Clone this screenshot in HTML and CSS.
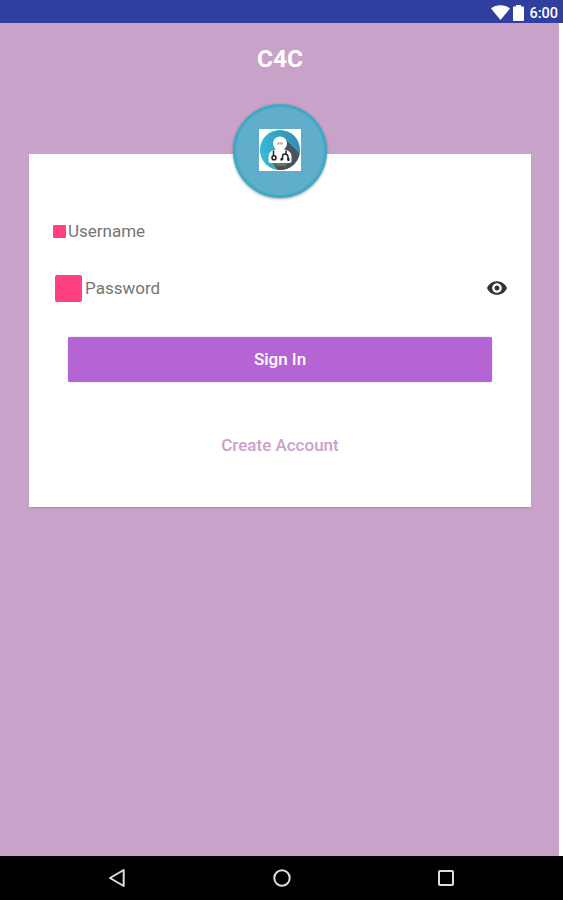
FILE: index.html
```html
<!DOCTYPE html>
<html lang="en">
<head>
    <meta charset="UTF-8">
    <meta name="viewport" content="width=device-width, initial-scale=1.0">
    <title>C4C</title>
    <link rel="stylesheet" href="styles.css">
</head>
<body>
    <header class="status-bar">
        <svg class="wifi" width="19" height="15" viewBox="0 0 19 15">
            <path d="M0 3.5C5.2-.8 13.8-.8 19 3.5L9.5 15Z" fill="#fff"/>
        </svg>
        <svg class="battery" width="11" height="16" viewBox="0 0 11 16">
            <path d="M3 0h5v1.500h2.200q.8 0 .8.8v12.900q0 .8-.8.8H.8Q0 16 0 15.200V2.300Q0 1.500.8 1.500H3Z" fill="#fff"/>
        </svg>
        <span class="time">6:00</span>
    </header>
    <main class="screen">
        <h1>C4C</h1>
        <div class="card">
            <div class="logo">
                <svg width="42" height="42" viewBox="0 0 42 42">
                    <defs>
                        <linearGradient id="disc" x1="0" y1="0.6" x2="1" y2="0.4">
                            <stop offset="0" stop-color="#35bcd6"/>
                            <stop offset="1" stop-color="#358bb4"/>
                        </linearGradient>
                        <clipPath id="round"><circle cx="21" cy="21" r="20"/></clipPath>
                    </defs>
                    <rect width="42" height="42" fill="#fff"/>
                    <g clip-path="url(#round)">
                        <rect width="42" height="42" fill="url(#disc)"/>
                        <path d="M27 11L42 26V42H19L13 33Z" fill="#46545c"/>
                        <path d="M14 34h15l-3 3H18Z" fill="#70744f"/>
                    </g>
                    <path d="M9.500 32V28q0-5 4-6.500l4-1.500h7l4 1.500q4 1.500 4 6.500v4q0 2-2 2h-19q-2 0-2-2Z" fill="#fff"/>
                    <circle cx="21" cy="14.500" r="7" fill="#fff"/>
                    <path d="M18 14.500h6" stroke="#a8bcc4" stroke-width="2"/>
                    <path d="M14.500 21.500V27M23.500 31v-3.500q0-2.500 2.500-2.500t3 2.500V31M27 25v-3.500" fill="none" stroke="#222" stroke-width="1.500"/>
                    <circle cx="15" cy="28.700" r="2" fill="none" stroke="#222" stroke-width="1.600"/>
                    <path d="M22.500 29v2.500M29.500 29v3" stroke="#222" stroke-width="2"/>
                </svg>
            </div>
            <div class="field username">
                <span class="mark small"></span>
                <label>Username</label>
            </div>
            <div class="field password">
                <span class="mark"></span>
                <label>Password</label>
                <svg class="eye" width="20" height="14" viewBox="1 4.500 22 15">
                    <path d="M12 4.500C7 4.500 2.730 7.610 1 12c1.730 4.390 6 7.500 11 7.500s9.270-3.110 11-7.500c-1.730-4.390-6-7.500-11-7.500zM12 17.300c-2.900 0-5.300-2.400-5.300-5.300s2.400-5.300 5.300-5.300 5.300 2.400 5.300 5.300-2.400 5.300-5.300 5.300zm0-8.100c-1.550 0-2.800 1.250-2.800 2.800s1.250 2.800 2.800 2.800 2.800-1.250 2.800-2.800-1.250-2.800-2.800-2.800z" fill="#333"/>
                </svg>
            </div>
            <button class="sign-in">Sign In</button>
            <a class="create">Create Account</a>
        </div>
    </main>
    <footer class="nav-bar">
        <svg width="18" height="20" viewBox="0 0 18 20">
            <path d="M15.700 2V18L2 10Z" fill="none" stroke="#ddd" stroke-width="2" stroke-linejoin="round"/>
        </svg>
        <svg width="18" height="18" viewBox="0 0 18 18">
            <circle cx="9" cy="9" r="7.700" fill="none" stroke="#ddd" stroke-width="2"/>
        </svg>
        <svg width="18" height="18" viewBox="0 0 18 18">
            <rect x="2" y="2" width="14" height="14" rx="1" fill="none" stroke="#ddd" stroke-width="2"/>
        </svg>
    </footer>
</body>
</html>
```

FILE: styles.css
```css
* {
    box-sizing: border-box;
}

body {
    display: flex;
    flex-direction: column;
    height: 100vh;
    margin: 0;
    background-color: #fff;
    font-family: Roboto, sans-serif;
}

.status-bar {
    display: flex;
    align-items: center;
    justify-content: flex-end;
    height: 23px;
    padding: 2px 5px 0 0;
    background-color: #303f9f;
    color: #fff;
}

.wifi {
    margin-right: 3px;
}

.battery {
    margin-right: 5px;
}

.time {
    padding-top: 2px;
    font-size: 14.5px;
    font-weight: 500;
}

.screen {
    flex: 1;
    margin-right: 4px;
    padding: 22px 28px 0 29px;
    background-color: #c8a2c8;
}

h1 {
    margin: 0 0 81px;
    color: #fff;
    font-size: 24.5px;
    font-weight: 700;
    line-height: 28px;
    text-align: center;
}

.card {
    display: flex;
    flex-direction: column;
    height: 353px;
    padding: 0 24px;
    background-color: #fff;
    box-shadow: 0 1px 1px rgba(90, 50, 90, 0.2);
}

.logo {
    display: flex;
    align-items: center;
    justify-content: center;
    align-self: center;
    width: 94px;
    height: 94px;
    margin-top: -50px;
    border: 3px solid #3fa9c8;
    border-radius: 50%;
    background-color: #60aec9;
    box-shadow: 0 1px 3px rgba(0, 0, 0, 0.35);
}

.logo svg {
    margin-top: -2px;
}

.field {
    display: flex;
    align-items: center;
    height: 28px;
    color: #757575;
    font-size: 17px;
}

.username {
    margin-top: 19px;
}

.password {
    margin-top: 29px;
}

.mark {
    width: 27px;
    height: 27px;
    margin: 0 3px 0 2px;
    border-radius: 2px;
    background-color: #ff4081;
}

.mark.small {
    width: 13px;
    height: 13px;
    margin: 0 2px 0 0;
    border-radius: 1px;
}

.eye {
    margin-left: auto;
}

.sign-in {
    height: 45px;
    margin: 35px 15px 0;
    padding: 0 0 2px;
    border: none;
    border-radius: 2px;
    background-color: #b565d3;
    box-shadow: 0 0 1px #8e4aa8;
    color: #fff;
    font-family: inherit;
    font-size: 17px;
    font-weight: 500;
}

.create {
    margin-top: 53px;
    color: #c8a2c8;
    font-size: 17px;
    font-weight: 500;
    line-height: 20px;
    text-align: center;
}

.nav-bar {
    display: flex;
    align-items: center;
    justify-content: space-between;
    height: 44px;
    padding: 0 108px;
    background-color: #000;
}
```
